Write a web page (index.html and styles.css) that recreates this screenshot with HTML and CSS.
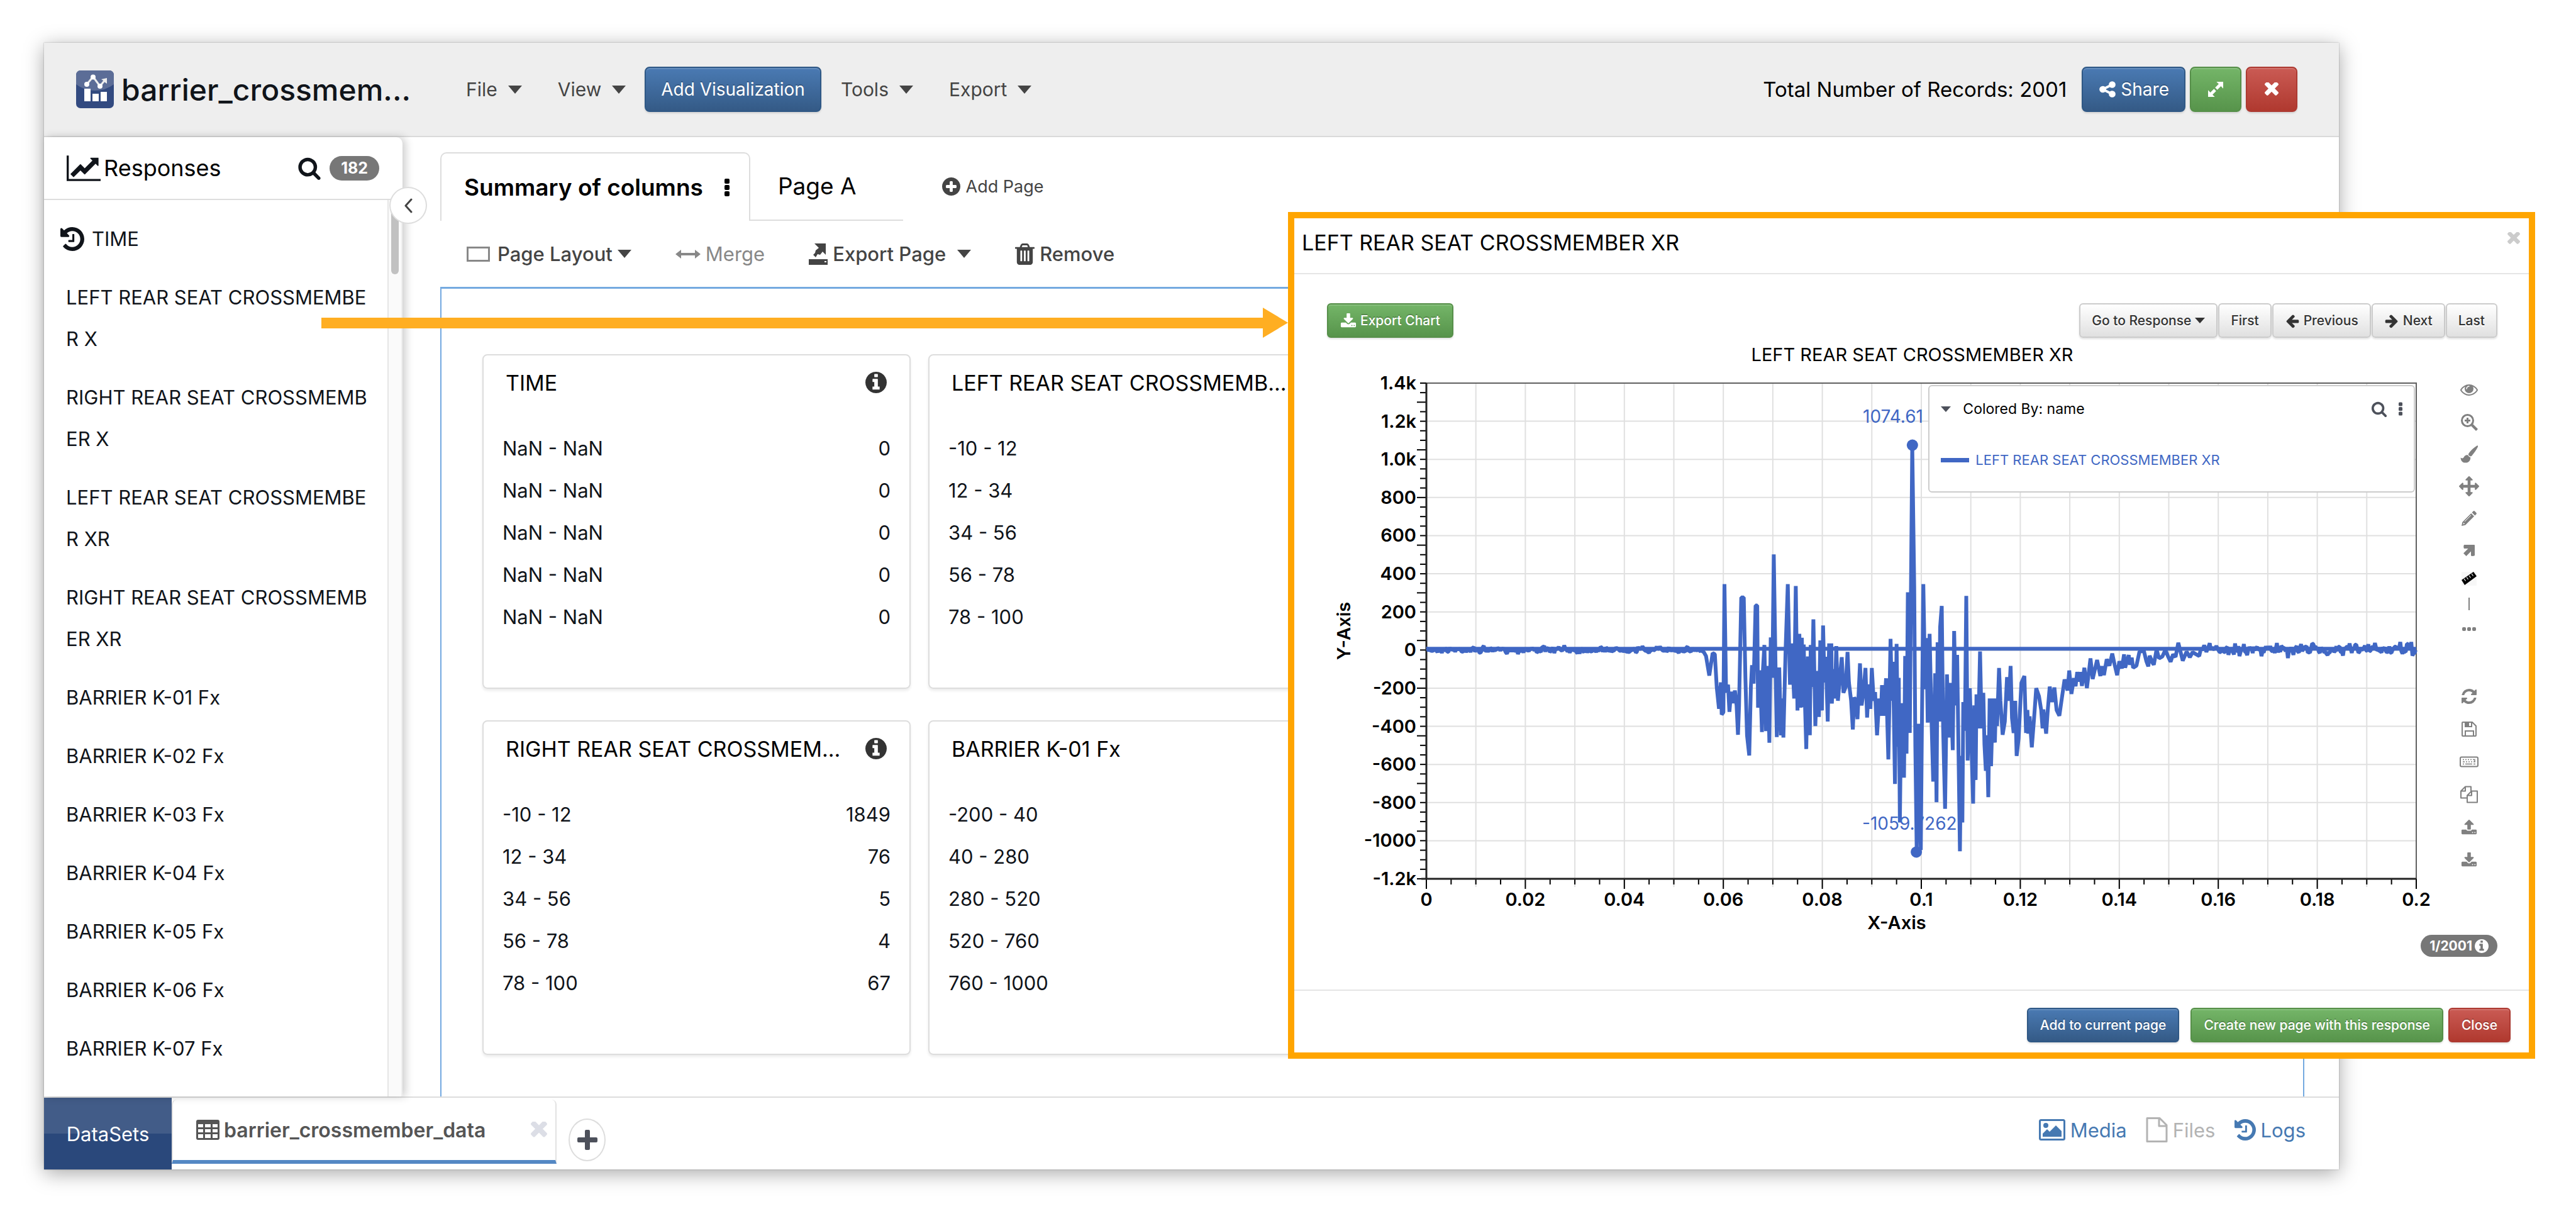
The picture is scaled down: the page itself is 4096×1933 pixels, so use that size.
FILE: index.html
```html
<!DOCTYPE html>
<html lang="en">
<head>
    <meta charset="UTF-8">
    <meta name="viewport" content="width=device-width, initial-scale=1.0">
    <title>barrier_crossmember_data</title>
    <link rel="stylesheet" href="styles.css">
</head>
<body>
    <svg class="sprite" aria-hidden="true">
        <symbol id="i-search" viewBox="0 0 1792 1792"><path d="M1216 832q0-185-131.5-316.5t-316.5-131.5-316.5 131.5-131.5 316.5 131.5 316.5 316.5 131.5 316.5-131.5 131.5-316.5zm512 832q0 52-38 90t-90 38q-54 0-90-38l-343-342q-179 124-399 124-143 0-273.5-55.5t-225-150-150-225-55.5-273.5 55.5-273.5 150-225 225-150 273.5-55.5 273.5 55.5 225 150 150 225 55.5 273.5q0 220-124 399l343 343q37 37 37 90z"/></symbol>
        <symbol id="i-share" viewBox="0 0 1792 1792"><path d="M1344 1024q133 0 226.5 93.5t93.5 226.5-93.5 226.5-226.5 93.5-226.5-93.5-93.5-226.5q0-12 2-34l-360-180q-92 86-218 86-133 0-226.5-93.5t-93.5-226.5 93.5-226.5 226.5-93.5q126 0 218 86l360-180q-2-22-2-34 0-133 93.5-226.5t226.5-93.5 226.5 93.5 93.5 226.5-93.5 226.5-226.5 93.5q-126 0-218-86l-360 180q2 22 2 34t-2 34l360 180q92-86 218-86z"/></symbol>
        <symbol id="i-expand" viewBox="0 0 24 24"><path d="M13 3h8v8l-2.700-2.700-4.300 4.300-2.600-2.600 4.300-4.300zM11 21H3v-8l2.700 2.700 4.300-4.300 2.600 2.600-4.300 4.300z"/></symbol>
        <symbol id="i-times" viewBox="302 430 1188 1190"><path d="M1490 1322q0 40-28 68l-136 136q-28 28-68 28t-68-28l-294-294-294 294q-28 28-68 28t-68-28l-136-136q-28-28-28-68t28-68l294-294-294-294q-28-28-28-68t28-68l136-136q28-28 68-28t68 28l294 294 294-294q28-28 68-28t68 28l136 136q28 28 28 68t-28 68l-294 294 294 294q28 28 28 68z"/></symbol>
        <symbol id="i-history" viewBox="128 128 1536 1536"><path d="M1664 896q0 156-61 298t-164 245-245 164-298 61q-172 0-327-72.500t-264-204.500q-7-10-6.500-22.500t8.500-20.500l137-138q10-9 25-9 16 2 23 12 73 95 179 147t225 52q104 0 198.500-40.500t163.500-109.500 109.500-163.500 40.500-198.500-40.500-198.500-109.500-163.500-163.500-109.500-198.500-40.500q-98 0-188 35.500t-160 101.500l137 138q31 30 14 69-17 40-59 40h-448q-26 0-45-19t-19-45v-448q0-42 40-59 39-17 69 14l130 129q107-101 244.500-156.500t284.500-55.500q156 0 298 61t245 164 164 245 61 298zm-640-288v448q0 14-9 23t-23 9h-320q-14 0-23-9t-9-23v-64q0-14 9-23t23-9h224v-352q0-14 9-23t23-9h64q14 0 23 9t9 23z"/></symbol>
        <symbol id="i-line-chart" viewBox="0 128 2048 1536"><path d="M2048 1536v128h-2048v-1536h128v1408h1920zm-128-1248v435q0 21-19.500 29.500t-35.500-7.500l-121-121-633 633q-10 10-23 10t-23-10l-233-233-416 416-192-192 585-585q10-10 23-10t23 10l233 233 464-464-121-121q-16-16-7.500-35.500t29.500-19.500h435q14 0 23 9t9 23z"/></symbol>
        <symbol id="i-plus-circle" viewBox="128 128 1536 1536"><path d="M1344 960v-128q0-26-19-45t-45-19h-256v-256q0-26-19-45t-45-19h-128q-26 0-45 19t-19 45v256h-256q-26 0-45 19t-19 45v128q0 26 19 45t45 19h256v256q0 26 19 45t45 19h128q26 0 45-19t19-45v-256h256q26 0 45-19t19-45zm320-64q0 209-103 385.500t-279.500 279.500-385.500 103-385.500-103-279.500-279.500-103-385.500 103-385.500 279.500-279.500 385.500-103 385.500 103 279.500 279.500 103 385.500z"/></symbol>
        <symbol id="i-info" viewBox="128 128 1536 1536"><path d="M1152 1376v-160q0-14-9-23t-23-9h-96v-512q0-14-9-23t-23-9h-320q-14 0-23 9t-9 23v160q0 14 9 23t23 9h96v320h-96q-14 0-23 9t-9 23v160q0 14 9 23t23 9h448q14 0 23-9t9-23zm-128-896v-160q0-14-9-23t-23-9h-192q-14 0-23 9t-9 23v160q0 14 9 23t23 9h192q14 0 23-9t9-23zm640 416q0 209-103 385.500t-279.500 279.500-385.500 103-385.500-103-279.500-279.500-103-385.500 103-385.500 279.500-279.500 385.500-103 385.500 103 279.500 279.500 103 385.500z"/></symbol>
        <symbol id="i-kebab" viewBox="0 0 8 28"><rect x="0" y="0" width="8" height="8" rx="2"/><rect x="0" y="10" width="8" height="8" rx="2"/><rect x="0" y="20" width="8" height="8" rx="2"/></symbol>
        <symbol id="i-trash" viewBox="192 128 1408 1536"><path d="M704 1376v-704q0-14-9-23t-23-9h-64q-14 0-23 9t-9 23v704q0 14 9 23t23 9h64q14 0 23-9t9-23zm256 0v-704q0-14-9-23t-23-9h-64q-14 0-23 9t-9 23v704q0 14 9 23t23 9h64q14 0 23-9t9-23zm256 0v-704q0-14-9-23t-23-9h-64q-14 0-23 9t-9 23v704q0 14 9 23t23 9h64q14 0 23-9t9-23zm-544-992h448l-48-117q-7-9-17-11h-317q-10 2-17 11zm928 32v64q0 14-9 23t-23 9h-96v948q0 83-47 143.500t-113 60.500h-832q-66 0-113-58.500t-47-141.500v-952h-96q-14 0-23-9t-9-23v-64q0-14 9-23t23-9h309l70-167q15-37 54-63t79-26h320q40 0 79 26t54 63l70 167h309q14 0 23 9t9 23z"/></symbol>
        <symbol id="i-merge" viewBox="0 0 40 14"><path d="M0 7l9-7v5h22V0l9 7-9 7V9H9v5z"/></symbol>
        <symbol id="i-export" viewBox="0 0 30 34"><path d="M0 25h30v9H0zM9 0h18v18l-5-5-4 5-4-1-3 5-4-4 3-3 1-4 5-4z"/><rect x="25" y="28" width="3" height="2" fill="#fff"/></symbol>
        <symbol id="i-arrow-left" viewBox="0 0 1792 1792"><path d="M1664 896v128q0 53-32.500 90.500t-84.500 37.500h-704l293 294q38 36 38 90t-38 90l-75 76q-37 37-90 37-52 0-91-37l-651-652q-37-37-37-90 0-52 37-91l651-650q38-38 91-38 52 0 90 38l75 74q38 38 38 91t-38 91l-293 293h704q52 0 84.500 37.500t32.500 90.500z"/></symbol>
        <symbol id="i-arrow-right" viewBox="0 0 1792 1792"><path transform="translate(1792 0) scale(-1 1)" d="M1664 896v128q0 53-32.500 90.500t-84.500 37.500h-704l293 294q38 36 38 90t-38 90l-75 76q-37 37-90 37-52 0-91-37l-651-652q-37-37-37-90 0-52 37-91l651-650q38-38 91-38 52 0 90 38l75 74q38 38 38 91t-38 91l-293 293h704q52 0 84.500 37.500t32.500 90.500z"/></symbol>
        <symbol id="i-download" viewBox="0 0 1792 1664"><path d="M1344 1344q0-26-19-45t-45-19-45 19-19 45 19 45 45 19 45-19 19-45zm256 0q0-26-19-45t-45-19-45 19-19 45 19 45 45 19 45-19 19-45zm128-224v320q0 40-28 68t-68 28h-1472q-40 0-68-28t-28-68v-320q0-40 28-68t68-28h465l135 136q58 56 136 56t136-56l136-136h464q40 0 68 28t28 68zm-325-569q17 41-14 70l-448 448q-18 19-45 19t-45-19l-448-448q-31-29-14-70 17-39 59-39h256v-448q0-26 19-45t45-19h256q26 0 45 19t19 45v448h256q42 0 59 39z"/></symbol>
        <symbol id="i-upload" viewBox="0 0 1792 1792"><path d="M1344 1472q0-26-19-45t-45-19-45 19-19 45 19 45 45 19 45-19 19-45zm256 0q0-26-19-45t-45-19-45 19-19 45 19 45 45 19 45-19 19-45zm128-224v320q0 40-28 68t-68 28h-1472q-40 0-68-28t-28-68v-320q0-40 28-68t68-28h427q21 56 70.500 92t110.500 36h256q61 0 110.500-36t70.500-92h427q40 0 68 28t28 68zm-325-648q-17 40-59 40h-256v448q0 26-19 45t-45 19h-256q-26 0-45-19t-19-45v-448h-256q-42 0-59-40-17-39 14-69l448-448q18-19 45-19t45 19l448 448q31 30 14 69z"/></symbol>
        <symbol id="i-eye" viewBox="0 64 1792 1792"><path d="M1664 960q-152-236-381-353 61 104 61 225 0 185-131.500 316.500t-316.500 131.500-316.500-131.500-131.500-316.500q0-121 61-225-229 117-381 353 133 205 333.500 326.500t434.500 121.500 434.500-121.500 333.500-326.500zm-720-384q0-20-14-34t-34-14q-125 0-214.500 89.500t-89.500 214.500q0 20 14 34t34 14 34-14 14-34q0-86 61-147t147-61q20 0 34-14t14-34zm848 384q0 34-20 69-140 230-376.500 368.500t-499.500 138.500-499.500-139-376.500-368q-20-35-20-69t20-69q140-229 376.500-368t499.500-139 499.500 139 376.500 368q20 35 20 69z"/></symbol>
        <symbol id="i-zoom" viewBox="0 0 28 28"><circle cx="11.500" cy="11.500" r="9" fill="none" stroke="currentColor" stroke-width="3"/><path d="M10 7h3v3h3v3h-3v3h-3v-3H7v-3h3zM17 20l3-3 8 8-3 3z"/></symbol>
        <symbol id="i-brush" viewBox="0 0 28 28"><path d="M26.500.600c1.500-.9 2 .6 1.200 2.200-2.500 5-6 9.900-9.300 13.600-1.300 1.400-2.800 1.300-4.200.2-1.500-1.200-1.700-2.600-.6-4.200C16.800 8 21.800 3.400 26.500.6zM12.200 15.500c.9 2 2.200 3.100 4 3.500.3 4.800-2.700 8.300-7.400 8.600C4 27.900.900 24.900.500 19.400c2 1.400 3.800 1.600 5.200-.7 1.300-2.400 3.500-3.800 6.500-3.200z"/></symbol>
        <symbol id="i-move" viewBox="0 0 1792 1792"><path d="M1792 896q0 26-19 45l-256 256q-19 19-45 19t-45-19-19-45v-128h-384v384h128q26 0 45 19t19 45-19 45l-256 256q-19 19-45 19t-45-19l-256-256q-19-19-19-45t19-45 45-19h128v-384h-384v128q0 26-19 45t-45 19-45-19l-256-256q-19-19-19-45t19-45l256-256q19-19 45-19t45 19 19 45v128h384v-384h-128q-26 0-45-19t-19-45 19-45l256-256q19-19 45-19t45 19l256 256q19 19 19 45t-19 45-45 19h-128v384h384v-128q0-26 19-45t45-19 45 19l256 256q19 19 19 45z"/></symbol>
        <symbol id="i-pencil" viewBox="0 0 24 24"><path d="M18.500.700c.800-.800 1.800-.8 2.600 0l2.200 2.200c.8.800.8 1.800 0 2.600l-2 2-4.800-4.800zM15.300 4l4.700 4.700L6 22.700 0 24l1.300-6zM3.200 18.800l-.7 2.700 2.700-.7z"/><path d="M5 17L15 7" stroke="#fff" stroke-width="1"/></symbol>
        <symbol id="i-arrow-ne" viewBox="0 0 18 18"><path d="M1 0h16q1 0 1 1v16q-3 1.500-6 .5V10.500L4.500 18 0 13.500 7.500 6H1Q-.5 3 1 0z"/></symbol>
        <symbol id="i-ruler" viewBox="0 0 24 22"><rect width="24" height="22" fill="#f7f7f7"/><path fill="#000" d="M0 13L19 0l5 7L5 21z"/><path d="M4 11l2.500 3.500M8 8.500l2.500 3.500M12 6l2.500 3.500M16 3l2.500 3.500" stroke="#fff" stroke-width="1.200"/></symbol>
        <symbol id="i-vline" viewBox="0 0 20 20"><rect x="9" y="0" width="2" height="20"/></symbol>
        <symbol id="i-dots" viewBox="0 0 22 6"><rect width="6" height="6" rx="2"/><rect x="8" width="6" height="6" rx="2"/><rect x="16" width="6" height="6" rx="2"/></symbol>
        <symbol id="i-refresh" viewBox="128 128 1536 1536"><path d="M1639 1056q0 5-1 7-64 268-268 434.500t-478 166.500q-146 0-282.500-55t-243.500-157l-129 129q-19 19-45 19t-45-19-19-45v-448q0-26 19-45t45-19h448q26 0 45 19t19 45-19 45l-137 137q71 66 161 102t187 36q134 0 250-65t186-179q11-17 53-117 8-23 30-23h192q13 0 22.500 9.500t9.500 22.500zm25-800v448q0 26-19 45t-45 19h-448q-26 0-45-19t-19-45 19-45l138-138q-148-137-349-137-134 0-250 65t-186 179q-11 17-53 117-8 23-30 23h-199q-13 0-22.500-9.500t-9.500-22.500v-7q65-268 270-434.500t480-166.500q146 0 284 55.500t245 156.500l130-129q19-19 45-19t45 19 19 45z"/></symbol>
        <symbol id="i-save" viewBox="0 0 24 24"><path d="M2 1h15l6 6v15q0 1-1 1H2q-1 0-1-1V2q0-1 1-1zM6 23v-8h13v8M6 1v7h10V1" fill="none" stroke="currentColor" stroke-width="2"/><rect x="6" y="2" width="6" height="6"/></symbol>
        <symbol id="i-keyboard" viewBox="0 0 30 17"><rect x="1" y="1" width="28" height="15" rx="2" fill="none" stroke="currentColor" stroke-width="2"/><path d="M5 5h2m2 0h2m2 0h2m2 0h2m2 0h3v3M5 8.500h3m2 0h2m2 0h2m2 0h2m2 0h3M5 12h2m2 0h11m2 0h3" fill="none" stroke="currentColor" stroke-width="1.500"/></symbol>
        <symbol id="i-copy" viewBox="0 0 28 27"><path d="M11 19H1V8l7-7h9v7M8 1v7H1M18 8v7h-7M18 8h9v18H11V15z" fill="none" stroke="currentColor" stroke-width="2" stroke-linejoin="round"/></symbol>
        <symbol id="i-table" viewBox="0 0 37 32"><path fill-rule="evenodd" d="M3 0h31q3 0 3 3v26q0 3-3 3H3q-3 0-3-3V3q0-3 3-3zM3 7v5h8V7zm11 0v5h9V7zm12 0v5h8V7zM3 15v5h8v-5zm11 0v5h9v-5zm12 0v5h8v-5zM3 23v6h8v-6zm11 0v6h9v-6zm12 0v6h8v-6z"/></symbol>
        <symbol id="i-picture" viewBox="0 0 42 34"><rect x="1.500" y="1.500" width="39" height="31" rx="2" fill="none" stroke="currentColor" stroke-width="3"/><circle cx="11" cy="10" r="4"/><path d="M6 28v-5l7-7 4 4 10-10 9 9v9z"/></symbol>
        <symbol id="i-file" viewBox="0 0 35 40"><path d="M2 1.500h20l11 11v26H2zM21 2v12h12" fill="none" stroke="currentColor" stroke-width="3" stroke-linejoin="round"/></symbol>
        <symbol id="i-plus" viewBox="0 0 32 32"><path d="M12 2q0-2 2-2h4q2 0 2 2v10h10q2 0 2 2v4q0 2-2 2H20v10q0 2-2 2h-4q-2 0-2-2V20H2q-2 0-2-2v-4q0-2 2-2h10z"/></symbol>
        <symbol id="i-chevron" viewBox="0 0 14 24"><path d="M12 2L3 12l9 10" fill="none" stroke="currentColor" stroke-width="3" stroke-linecap="round" stroke-linejoin="round"/></symbol>
    </svg>

    <div class="app">
        <header class="topbar">
            <div class="brand">
                <svg class="logo" viewBox="0 0 60 60">
                    <defs><clipPath id="logo-clip"><rect width="60" height="60" rx="7"/></clipPath></defs>
                    <g clip-path="url(#logo-clip)">
                        <rect width="60" height="60" fill="#324a80"/>
                        <path d="M0 0h60v22Q47 32 30 32T0 22z" fill="#5c6d97"/>
                    </g>
                    <path d="M17 22l10-12 11 15 8-10" fill="none" stroke="#ededed" stroke-width="3"/>
                    <path d="M49 12l0 9-3-2-3-3-3-2z" fill="#ededed"/>
                    <g fill="#fff">
                        <circle cx="17" cy="22" r="4"/><circle cx="27" cy="10.500" r="4"/><circle cx="38" cy="25" r="4"/>
                        <rect x="13" y="29" width="10" height="20"/><rect x="26" y="37" width="10" height="12"/><rect x="39" y="34" width="10" height="15"/>
                    </g>
                </svg>
                <h1 class="title">barrier_crossmem...</h1>
            </div>
            <nav class="menu">
                <button class="menu-item">File<span class="caret"></span></button>
                <button class="menu-item">View<span class="caret"></span></button>
                <button class="btn btn-primary btn-lg">Add Visualization</button>
                <button class="menu-item">Tools<span class="caret"></span></button>
                <button class="menu-item">Export<span class="caret"></span></button>
            </nav>
            <div class="topbar-right">
                <span class="records">Total Number of Records: 2001</span>
                <button class="btn btn-primary btn-lg"><svg class="icon ic-30"><use href="#i-share"/></svg>Share</button>
                <button class="btn btn-success btn-lg btn-square" aria-label="Full screen"><svg class="icon ic-32"><use href="#i-expand"/></svg></button>
                <button class="btn btn-danger btn-lg btn-square" aria-label="Close"><svg class="icon ic-22"><use href="#i-times"/></svg></button>
            </div>
        </header>

        <div class="workspace">
            <aside class="sidebar">
                <div class="sidebar-head">
                    <svg class="icon ic-chart"><use href="#i-line-chart"/></svg>
                    <h2>Responses</h2>
                    <svg class="icon ic-38"><use href="#i-search"/></svg>
                    <span class="badge">182</span>
                </div>
                <div class="sidebar-body">
                    <ul class="responses">
                        <li class="time"><svg class="icon ic-38"><use href="#i-history"/></svg>TIME</li>
                        <li>LEFT REAR SEAT CROSSMEMBER X</li>
                        <li>RIGHT REAR SEAT CROSSMEMBER X</li>
                        <li>LEFT REAR SEAT CROSSMEMBER XR</li>
                        <li>RIGHT REAR SEAT CROSSMEMBER XR</li>
                        <li>BARRIER K-01 Fx</li>
                        <li>BARRIER K-02 Fx</li>
                        <li>BARRIER K-03 Fx</li>
                        <li>BARRIER K-04 Fx</li>
                        <li>BARRIER K-05 Fx</li>
                        <li>BARRIER K-06 Fx</li>
                        <li>BARRIER K-07 Fx</li>
                    </ul>
                    <div class="scroll-track"><div class="scroll-thumb"></div></div>
                </div>
                <button class="collapse" aria-label="Collapse"><svg class="icon ic-chevron"><use href="#i-chevron"/></svg></button>
            </aside>

            <main class="content">
                <div class="tabs">
                    <button class="tab active">Summary of columns<svg class="icon ic-kebab"><use href="#i-kebab"/></svg></button>
                    <button class="tab">Page A</button>
                    <button class="add-page"><svg class="icon ic-29"><use href="#i-plus-circle"/></svg>Add Page</button>
                </div>
                <div class="page-tools">
                    <button class="tool tool-layout"><span class="square"></span>Page Layout<span class="caret"></span></button>
                    <button class="tool tool-merge" disabled><svg class="icon ic-merge"><use href="#i-merge"/></svg>Merge</button>
                    <button class="tool tool-export"><svg class="icon ic-export"><use href="#i-export"/></svg>Export Page<span class="caret"></span></button>
                    <button class="tool"><svg class="icon ic-trash"><use href="#i-trash"/></svg>Remove</button>
                </div>
                <div class="page">
                    <section class="card">
                        <h3>TIME<svg class="icon ic-34"><use href="#i-info"/></svg></h3>
                        <table>
                            <tr><td>NaN - NaN</td><td>0</td></tr>
                            <tr><td>NaN - NaN</td><td>0</td></tr>
                            <tr><td>NaN - NaN</td><td>0</td></tr>
                            <tr><td>NaN - NaN</td><td>0</td></tr>
                            <tr><td>NaN - NaN</td><td>0</td></tr>
                        </table>
                    </section>
                    <section class="card">
                        <h3>LEFT REAR SEAT CROSSMEMB...</h3>
                        <table>
                            <tr><td>-10 - 12</td></tr>
                            <tr><td>12 - 34</td></tr>
                            <tr><td>34 - 56</td></tr>
                            <tr><td>56 - 78</td></tr>
                            <tr><td>78 - 100</td></tr>
                        </table>
                    </section>
                    <section class="card">
                        <h3>RIGHT REAR SEAT CROSSMEM...<svg class="icon ic-34"><use href="#i-info"/></svg></h3>
                        <table>
                            <tr><td>-10 - 12</td><td>1849</td></tr>
                            <tr><td>12 - 34</td><td>76</td></tr>
                            <tr><td>34 - 56</td><td>5</td></tr>
                            <tr><td>56 - 78</td><td>4</td></tr>
                            <tr><td>78 - 100</td><td>67</td></tr>
                        </table>
                    </section>
                    <section class="card">
                        <h3>BARRIER K-01 Fx</h3>
                        <table>
                            <tr><td>-200 - 40</td></tr>
                            <tr><td>40 - 280</td></tr>
                            <tr><td>280 - 520</td></tr>
                            <tr><td>520 - 760</td></tr>
                            <tr><td>760 - 1000</td></tr>
                        </table>
                    </section>
                </div>
            </main>
        </div>

        <footer class="bottombar">
            <button class="datasets">DataSets</button>
            <div class="dataset-tab">
                <svg class="icon ic-table"><use href="#i-table"/></svg>
                <span class="dataset-name">barrier_crossmember_data</span>
                <svg class="icon ic-26"><use href="#i-times"/></svg>
            </div>
            <button class="add-dataset" aria-label="Add dataset"><svg class="icon ic-32"><use href="#i-plus"/></svg></button>
            <nav class="links">
                <a href="#"><svg class="icon ic-picture"><use href="#i-picture"/></svg>Media</a>
                <a href="#" class="muted"><svg class="icon ic-file"><use href="#i-file"/></svg>Files</a>
                <a href="#"><svg class="icon ic-34"><use href="#i-history"/></svg>Logs</a>
            </nav>
        </footer>
    </div>

    <div class="pointer"><span class="pointer-line"></span><span class="pointer-head"></span></div>

    <div class="modal" role="dialog">
        <div class="modal-head">
            <h2>LEFT REAR SEAT CROSSMEMBER XR</h2>
            <button class="modal-x" aria-label="Close"><svg class="icon ic-20"><use href="#i-times"/></svg></button>
        </div>
        <div class="modal-body">
            <div class="chart-bar">
                <button class="btn btn-success"><svg class="icon ic-26"><use href="#i-download"/></svg>Export Chart</button>
                <div class="pager">
                    <button class="btn btn-default">Go to Response<span class="caret caret-sm"></span></button>
                    <button class="btn btn-default">First</button>
                    <button class="btn btn-default"><svg class="icon ic-24"><use href="#i-arrow-left"/></svg>Previous</button>
                    <button class="btn btn-default"><svg class="icon ic-24"><use href="#i-arrow-right"/></svg>Next</button>
                    <button class="btn btn-default">Last</button>
                </div>
            </div>
            <h3 class="chart-title">LEFT REAR SEAT CROSSMEMBER XR</h3>
            <div class="chart-row">
                <div class="chart">
                    <svg id="plot" class="plot" viewBox="0 0 1771 896"></svg>
                    <div class="legend">
                        <div class="legend-head">
                            <span class="caret caret-sm"></span>
                            <span class="legend-title">Colored By: name</span>
                            <svg class="icon ic-26"><use href="#i-search"/></svg>
                            <svg class="icon ic-kebab-sm"><use href="#i-kebab"/></svg>
                        </div>
                        <div class="legend-item"><span class="swatch"></span>LEFT REAR SEAT CROSSMEMBER XR</div>
                    </div>
                </div>
                <div class="chart-tools">
                    <div class="group-a">
                        <svg class="icon ic-28"><use href="#i-eye"/></svg>
                        <svg class="icon ic-28"><use href="#i-zoom"/></svg>
                        <svg class="icon ic-28"><use href="#i-brush"/></svg>
                        <svg class="icon ic-32"><use href="#i-move"/></svg>
                        <svg class="icon ic-24"><use href="#i-pencil"/></svg>
                        <svg class="icon ic-18"><use href="#i-arrow-ne"/></svg>
                    </div>
                    <div class="group-b">
                        <svg class="icon ic-24"><use href="#i-ruler"/></svg>
                        <svg class="icon ic-20"><use href="#i-vline"/></svg>
                        <svg class="icon ic-22"><use href="#i-dots"/></svg>
                    </div>
                    <div class="group-c">
                        <svg class="icon ic-24"><use href="#i-refresh"/></svg>
                        <svg class="icon ic-24"><use href="#i-save"/></svg>
                        <svg class="icon ic-30"><use href="#i-keyboard"/></svg>
                        <svg class="icon ic-28"><use href="#i-copy"/></svg>
                        <svg class="icon ic-26"><use href="#i-upload"/></svg>
                        <svg class="icon ic-26"><use href="#i-download"/></svg>
                    </div>
                </div>
            </div>
            <div class="counter-row"><span class="counter">1/2001<svg class="icon ic-22"><use href="#i-info"/></svg></span></div>
        </div>
        <div class="modal-foot">
            <button class="btn btn-primary btn-add">Add to current page</button>
            <button class="btn btn-success">Create new page with this response</button>
            <button class="btn btn-danger">Close</button>
        </div>
    </div>

    <script src="script.js"></script>
</body>
</html>
```

FILE: styles.css
```css
* {
    box-sizing: border-box;
}
body {
    margin: 0;
    min-height: 100vh;
    padding: 68px 377px 74px 70px;
    position: relative;
    background: #fff;
    color: #10141a;
    font-family: Inter, "Liberation Sans", sans-serif;
    font-size: 31px;
}
h1, h2, h3, ul {
    margin: 0;
    padding: 0;
    font-weight: 400;
}
button {
    font: inherit;
    color: inherit;
    background: none;
    border: 0;
    padding: 0;
    margin: 0;
    display: flex;
    align-items: center;
    white-space: nowrap;
}
.sprite {
    position: absolute;
    width: 0;
    height: 0;
}
.icon {
    fill: currentColor;
    flex: none;
    display: block;
}
.ic-18 { width: 18px; height: 18px; }
.ic-20 { width: 20px; height: 20px; }
.ic-22 { width: 22px; height: 22px; }
.ic-24 { width: 24px; height: 24px; }
.ic-26 { width: 26px; height: 26px; }
.ic-28 { width: 28px; height: 28px; }
.ic-29 { width: 29px; height: 29px; }
.ic-30 { width: 30px; height: 30px; }
.ic-32 { width: 32px; height: 32px; }
.ic-34 { width: 34px; height: 34px; }
.ic-38 { width: 38px; height: 38px; }
.ic-chart { width: 54px; height: 41px; }
.ic-kebab { width: 8px; height: 28px; }
.ic-kebab-sm { width: 6px; height: 22px; }
.ic-merge { width: 40px; height: 14px; }
.ic-export { width: 30px; height: 34px; }
.ic-trash { width: 31px; height: 34px; }
.ic-table { width: 37px; height: 32px; }
.ic-picture { width: 42px; height: 34px; }
.ic-file { width: 35px; height: 40px; }
.ic-chevron { width: 14px; height: 24px; }
.caret {
    width: 0;
    height: 0;
    border-left: 11px solid transparent;
    border-right: 11px solid transparent;
    border-top: 13px solid currentColor;
}
.caret-sm {
    border-left-width: 8px;
    border-right-width: 8px;
    border-top-width: 9px;
}

/* buttons */
.btn {
    height: 55px;
    padding: 0 19px;
    gap: 6px;
    border: 2px solid;
    border-radius: 6px;
    justify-content: center;
    font-size: 21px;
    font-weight: 500;
    color: #fff;
    text-shadow: 0 -2px 0 rgba(0, 0, 0, 0.2);
    box-shadow: inset 0 2px 0 rgba(255, 255, 255, 0.15), 0 2px 3px rgba(0, 0, 0, 0.12);
}
.btn-lg {
    height: 72px;
    padding: 0 24px;
    font-size: 28px;
    font-weight: 400;
    border-radius: 8px;
}
.btn-square {
    width: 82px;
    padding: 0;
}
.btn-primary {
    background: linear-gradient(#4a7ab3, #345a86);
    border-color: #2f5885;
}
.btn-success {
    background: linear-gradient(#74b568, #57944b);
    border-color: #568f49;
}
.btn-danger {
    background: linear-gradient(#ca5b54, #b0392f);
    border-color: #ad3a32;
}
.btn-default {
    background: linear-gradient(#fff, #e0e0e0);
    border-color: #ccc;
    color: #333;
    padding: 0 18px;
    text-shadow: 0 2px 0 #fff;
}

/* app window */
.app {
    display: flex;
    flex-direction: column;
    min-height: calc(100vh - 142px);
    background: #fff;
    box-shadow: 0 6px 30px rgba(0, 0, 0, 0.35), 0 0 2px rgba(0, 0, 0, 0.3);
}
.topbar {
    display: flex;
    align-items: center;
    height: 150px;
    padding: 0 66px 0 51px;
    background: #eee;
    border-bottom: 2px solid #dadada;
}
.brand {
    display: flex;
    align-items: center;
    gap: 12px;
    width: 593px;
}
.logo {
    width: 60px;
    height: 60px;
}
.title {
    font-size: 48px;
    font-weight: 500;
}
.menu {
    display: flex;
    align-items: center;
    gap: 4px;
    flex: 1;
    color: #444;
}
.menu-item {
    padding: 0 26px 0 27px;
    gap: 17px;
    font-size: 30px;
}
.topbar-right {
    display: flex;
    align-items: center;
    gap: 7px;
}
.records {
    margin-right: 17px;
    font-size: 33px;
    color: #000;
}

.workspace {
    display: flex;
    flex: 1;
}
.sidebar {
    position: relative;
    display: flex;
    flex-direction: column;
    width: 570px;
    flex: none;
    border-top-right-radius: 10px;
    box-shadow: 5px 0 14px rgba(0, 0, 0, 0.2);
}
.sidebar-head {
    display: flex;
    align-items: center;
    height: 100px;
    padding: 0 37px 0 36px;
    border-bottom: 2px solid #ddd;
}
.sidebar-head h2 {
    flex: 1;
    margin-left: 5px;
    font-size: 36px;
    color: #000;
}
.badge {
    margin-left: 13px;
    padding: 0 18px;
    border-radius: 20px;
    background: #777;
    color: #fff;
    font-size: 25px;
    font-weight: 700;
    line-height: 39px;
}
.sidebar-body {
    display: flex;
    flex: 1;
}
.responses {
    flex: 1;
    padding: 16px 22px 0 35px;
    list-style: none;
    word-break: break-all;
}
.responses li {
    padding: 13px 0 14px;
    line-height: 66px;
}
.responses .time {
    display: flex;
    align-items: center;
    gap: 12px;
    margin-left: -9px;
}
.scroll-track {
    width: 24px;
    padding: 0 4px;
    background: #fafafa;
    border-left: 2px solid #e6e6e6;
    border-right: 2px solid #eee;
}
.scroll-thumb {
    height: 118px;
    border-radius: 6px;
    background: #c1c1c1;
}
.collapse {
    position: absolute;
    top: 79px;
    right: -39px;
    width: 60px;
    height: 59px;
    justify-content: center;
    border: 2px solid #ddd;
    border-radius: 50%;
    background: #fff;
    color: #444;
}

.content {
    flex: 1;
    display: flex;
    flex-direction: column;
    padding: 24px 55px 0 60px;
}
.tabs {
    display: flex;
    align-items: stretch;
    height: 109px;
    color: #000;
}
.tab {
    padding: 0 74px 0 44px;
    border-bottom: 2px solid #ddd;
    font-size: 37px;
}
.tab.active {
    gap: 34px;
    padding: 0 31px 0 36px;
    border: 2px solid #ddd;
    border-bottom: 0;
    border-radius: 10px 10px 0 0;
    font-weight: 600;
}
.add-page {
    gap: 9px;
    margin-left: 62px;
    font-size: 27px;
    color: #444;
}
.page-tools {
    display: flex;
    align-items: center;
    height: 105px;
    padding-left: 42px;
    color: #444;
}
.tool {
    gap: 8px;
    font-weight: 500;
}
.square {
    width: 37px;
    height: 24px;
    margin-right: 4px;
    border: 3px solid #888;
}
.tool-layout {
    margin-right: 70px;
}
.tool-merge {
    margin-right: 70px;
    color: #888;
    font-weight: 400;
}
.tool-export {
    margin-right: 70px;
}
.tool-export .caret {
    margin-left: 10px;
}
.page {
    flex: 1;
    display: grid;
    grid-template-columns: repeat(4, 1fr);
    grid-auto-rows: 532px;
    gap: 50px 28px;
    padding: 104px 87px 64px 65px;
    border: 2px solid #74a9e0;
    border-top-width: 3px;
    border-bottom: 0;
}
.card {
    border: 2px solid #ddd;
    border-radius: 8px;
    padding: 13px 30px 0;
    box-shadow: 0 3px 4px rgba(0, 0, 0, 0.08);
}
.card:nth-child(odd) {
    grid-column: 1;
}
.card:nth-child(even) {
    grid-column: 2;
}
.card h3 {
    display: flex;
    align-items: center;
    justify-content: space-between;
    height: 60px;
    margin-bottom: 41px;
    padding: 0 6px 0 5px;
    font-size: 34px;
    color: #000;
    white-space: nowrap;
}
.card .icon {
    color: #333;
}
.card table {
    width: 100%;
    border-collapse: collapse;
}
.card td {
    height: 67px;
    padding: 0;
}
.card td + td {
    text-align: right;
}

.bottombar {
    display: flex;
    height: 116px;
    border-top: 2px solid #ddd;
}
.datasets {
    width: 203px;
    justify-content: center;
    background: linear-gradient(#425c88 50%, #2a487b 50%);
    color: #fff;
}
.dataset-tab {
    display: flex;
    align-items: center;
    width: 612px;
    margin: 3px 0 9px;
    padding: 0 13px 0 37px;
    border: 2px solid #e2e2e2;
    border-top: 0;
    border-bottom: 6px solid #5488c4;
    border-radius: 8px 8px 0 0;
    color: #555;
}
.dataset-name {
    flex: 1;
    margin-left: 7px;
    font-size: 32px;
    font-weight: 600;
}
.dataset-tab .ic-26 {
    color: #dcdee6;
}
.add-dataset {
    width: 59px;
    height: 68px;
    margin: 33px 0 0 19px;
    justify-content: center;
    border: 2px solid #ddd;
    border-radius: 50%;
    color: #4d515b;
}
.links {
    display: flex;
    align-items: center;
    gap: 30px;
    margin: 0 53px 12px auto;
}
.links a {
    display: flex;
    align-items: center;
    gap: 8px;
    color: #4679b2;
    text-decoration: none;
}
.links .muted {
    color: #b3b3b3;
}

/* arrow from the list to the dialog */
.pointer {
    position: absolute;
    top: 489px;
    left: 511px;
    right: 50%;
    display: flex;
    align-items: center;
}
.pointer-line {
    flex: 1;
    height: 17px;
    background: #ffae22;
}
.pointer-head {
    border-top: 24px solid transparent;
    border-bottom: 24px solid transparent;
    border-left: 40px solid #ffae22;
}

.modal {
    position: absolute;
    top: 337px;
    left: 50%;
    right: 65px;
    border: 10px solid #ffa500;
    background: #fff;
}
.modal-head {
    display: flex;
    justify-content: space-between;
    padding: 11px 14px 20px 12px;
    border-bottom: 2px solid #e5e5e5;
}
.modal-head h2 {
    font-size: 34px;
    line-height: 56px;
    color: #000;
}
.modal-x {
    height: 42px;
    color: #ccc;
}
.modal-body {
    padding: 46px 50px 52px 52px;
    border-bottom: 2px solid #e5e5e5;
}
.chart-bar {
    display: flex;
    justify-content: space-between;
}
.pager {
    display: flex;
    gap: 1px;
}
.chart-title {
    margin-top: 7px;
    text-align: center;
    font-size: 29px;
    line-height: 40px;
    color: #000;
}
.chart-row {
    display: flex;
    margin-top: 6px;
}
.chart {
    position: relative;
    flex: 1;
}
.plot {
    display: block;
    width: 100%;
}
.legend {
    position: absolute;
    top: 22px;
    left: 54%;
    right: 41px;
    height: 171px;
    padding: 22px 18px 0 18px;
    background: #fff;
    border: 2px solid #ccc;
    border-radius: 6px;
}
.legend-head {
    display: flex;
    align-items: center;
    color: #4d515b;
}
.legend-title {
    flex: 1;
    margin-left: 19px;
    font-size: 23px;
    color: #000;
}
.ic-kebab-sm {
    margin-left: 18px;
}
.legend-item {
    display: flex;
    align-items: center;
    gap: 10px;
    margin-top: 54px;
    font-size: 22px;
    color: #4067c4;
}
.swatch {
    width: 45px;
    height: 7px;
    background: #4067c4;
}
.chart-tools {
    width: 90px;
    padding-top: 4px;
    color: #808080;
}
.chart-tools div {
    display: grid;
    place-items: center;
}
.group-a {
    grid-auto-rows: 51px;
}
.group-b {
    grid-auto-rows: 40px;
}
.group-c {
    grid-auto-rows: 52px;
    margin-top: 61px;
}
.counter-row {
    display: flex;
    justify-content: flex-end;
}
.counter {
    display: flex;
    align-items: center;
    gap: 4px;
    height: 35px;
    padding: 0 14px;
    border-radius: 18px;
    background: #777;
    color: #fff;
    font-size: 21px;
    font-weight: 700;
}
.modal-foot {
    display: flex;
    justify-content: flex-end;
    gap: 8px;
    padding: 27px 29px 16px;
}
.btn-add {
    margin-right: 10px;
}

/* chart */
.grid {
    stroke: #e0e0e0;
    stroke-width: 2;
}
.tick {
    stroke: #000;
    stroke-width: 2;
}
.frame {
    fill: none;
    stroke: #606060;
    stroke-width: 2;
}
.axis {
    stroke: #222;
    stroke-width: 3;
}
.zero {
    stroke: #999;
    stroke-width: 2;
}
.tick-label, .axis-label {
    font-size: 29px;
    font-weight: 600;
    fill: #000;
}
.axis-label {
    text-anchor: middle;
}
.series {
    fill: none;
    stroke: #4067c4;
    stroke-width: 6;
    stroke-linejoin: bevel;
}
.marker {
    fill: #4067c4;
}
.marker-label {
    font-size: 28px;
    fill: #4067c4;
}
```

FILE: script.js
```js
const plot = document.getElementById('plot');
const area = { left: 158, top: 19, width: 1574, height: 788 };
const X_MAX = 0.2, Y_MIN = -1200, Y_MAX = 1400;

const px = t => area.left + t / X_MAX * area.width;
const py = v => area.top + (Y_MAX - v) / (Y_MAX - Y_MIN) * area.height;

function add(tag, attrs, text) {
    const el = document.createElementNS('http://www.w3.org/2000/svg', tag);
    for (const key in attrs) el.setAttribute(key, attrs[key]);
    if (text) el.textContent = text;
    plot.appendChild(el);
}
function line(cls, x1, y1, x2, y2) {
    add('line', { class: cls, x1, y1, x2, y2 });
}

const bottom = area.top + area.height;
const right = area.left + area.width;

// grid
for (let i = 1; i < 20; i++) line('grid', px(i / 100), area.top, px(i / 100), bottom + 13);
for (let v = -1000; v < 1400; v += 200) line('grid', area.left, py(v), right, py(v));
add('rect', { class: 'frame', x: area.left, y: area.top, width: area.width, height: area.height });

// ticks and labels
for (let v = Y_MIN; v <= Y_MAX; v += 50) {
    const long = (v + 1200) % 250 === 0;
    line('tick', area.left - (long ? 15 : 10), py(v), area.left, py(v));
}
for (let v = Y_MIN; v <= Y_MAX; v += 200) {
    let label = String(v);
    if (v >= 1000 || v === Y_MIN) label = (v / 1000).toFixed(1) + 'k';
    add('text', { class: 'tick-label', x: area.left - 16, y: py(v) + 10, 'text-anchor': 'end' }, label);
}
for (let i = 0; i <= 40; i++) {
    const x = px(i * 0.005);
    if (i % 4 === 0) {
        line('tick', x, bottom, x, bottom + 16);
        add('text', { class: 'tick-label', x, y: bottom + 43, 'text-anchor': 'middle' }, String(i * 5 / 1000));
    } else {
        line('tick', x, bottom, x, bottom + 9);
    }
}
line('axis', area.left, area.top, area.left, bottom);
line('axis', area.left - 8, bottom, right, bottom);
add('text', { class: 'axis-label', x: 906, y: 887 }, 'X-Axis');
add('text', { class: 'axis-label', x: 0, y: 0, transform: 'translate(37 413) rotate(-90)' }, 'Y-Axis');

const T0 = 0.04632, DT = 0.00005564, OFFSET = 576.6, GAIN = 1.2042;
const burst = [
    [165,480],[175,488],[183,505],[195,590],[207,492],[215,497],[222,640],[230,735],[237,620],[240,760],[246,750],[250,192],
    [256,665],[263,630],[268,748],[274,660],[281,710],[288,655],[294,720],[299,848],[303,720],[311,250],[320,250],
    [326,600],[332,850],[340,938],[346,640],[350,545],[356,625],[363,285],[369,285],[372,730],[379,567],[386,836],[390,560],[395,457],[401,832],
    [407,548],[413,883],[418,424],[424,600],[429,62],[436,600],[440,858],[449,555],[455,850],[460,690],[464,860],
    [472,480],[480,192],[488,630],[494,450],[503,690],[509,200],[515,742],[522,408],[526,730],[531,425],[535,728],[538,455],
    [542,700],[547,910],[553,507],[560,850],[563,457],[568,640],[573,345],[580,810],[587,570],[593,770],[598,437],
    [604,742],[608,372],[613,620],[618,508],[625,790],[630,450],[634,700],[638,450],[640,712],[645,562],[651,690],[656,462],[662,700],
    [669,600],[676,510],[682,665],[690,640],[697,487],[702,620],[710,700],[716,825],[721,685],[727,700],[733,780],
    [742,537],[748,720],[755,660],[762,557],[768,773],[774,628],[780,735],[785,557],[792,700],[797,662],[804,850],
    [812,690],[818,765],[822,632],[829,765],[837,602],[845,955],[853,430],[858,700],[862,530],[869,1062],[875,452],
    [880,900],[883,600],[887,1230],[892,710],[897,1000],[899,710],[902,1035],[906,505],[911,930],[916,227],[923,840],[927,232],
    [932,-413],[939,200],[943,900],[948,1355],[955,800],[963,1350],[967,790],[972,192],[979,650],[983,427],[988,795],
    [995,408],[1002,790],[1008,1052],[1015,580],[1020,1142],[1024,445],[1030,790],[1033,380],[1039,287],[1044,820],
    [1051,1170],[1058,585],[1064,860],[1071,622],[1079,915],[1084,396],[1090,720],[1095,500],[1100,930],[1105,1355],
    [1109,940],[1114,1230],[1117,705],[1123,830],[1128,243],[1133,960],[1141,645],[1147,900],[1153,1148],[1157,720],
    [1162,1045],[1165,672],[1172,820],[1178,485],[1184,820],[1190,665],[1194,890],[1199,1005],[1203,850],[1208,1120],
    [1213,690],[1218,985],[1225,690],[1232,882],[1236,690],[1240,810],[1247,557],[1252,700],[1260,848],[1268,790],[1276,597],
    [1283,700],[1289,548],[1294,775],[1300,840],[1306,700],[1311,940],[1318,865],[1328,622],[1339,592],[1345,840],
    [1350,740],[1353,843],[1358,768],[1366,903],[1374,780],[1382,645],[1392,680],[1400,740],[1405,820],[1408,738],
    [1418,843],[1424,740],[1431,638],[1439,705],[1448,642],[1456,740],[1466,765],[1475,690],[1485,607],[1496,655],
    [1502,568],[1510,670],[1519,601],[1525,637],[1531,575],[1538,616],[1542,575],[1548,635],[1557,556],[1566,645],
    [1579,515],[1587,605],[1603,522],[1615,592],[1621,549],[1628,588],[1638,519],[1648,547],[1658,494],[1667,544],
    [1676,588],[1684,528],[1693,559],[1701,498],[1705,556],[1718,501],[1723,543],[1729,512],[1734,556],[1746,547],
    [1757,486],[1773,483],[1782,528],[1789,550],[1794,504],[1804,533],[1809,543],[1819,476],[1828,515],[1840,507],
    [1851,478],[1861,507],[1870,530],[1879,498],[1888,509],[1898,447],[1914,525],[1928,486],[1940,510],[1950,488],
    [1961,496],[1974,505]
];

let seed = 7;
function rand() {
    seed = (seed * 16807) % 2147483647;
    return seed / 2147483647 * 2 - 1;
}
// quiet stretches before and after the impact
const lead = [], tail = [];
for (let n = -832; n < 165; n += 4) lead.push([n, 478 + 10 * rand() + 9 * rand() ** 3]);
for (let n = 1980; n <= 2762; n += 4) tail.push([n, 477 + 13 * rand() + 26 * rand() ** 3]);

const points = lead.concat(burst, tail)
    .map(([n, c]) => px(T0 + n * DT).toFixed(1) + ',' + py(OFFSET - GAIN * c).toFixed(1));
line('zero', area.left, py(0), right, py(0));
line('series', area.left, py(7), right, py(7));
add('polyline', { class: 'series', points: points.join(' ') });

add('circle', { class: 'marker', cx: px(0.0982), cy: py(1074.6), r: 9 });
add('circle', { class: 'marker', cx: px(0.099), cy: py(-1059.7), r: 9 });
add('text', { class: 'marker-label', x: 852, y: 82 }, '1074.61');
add('text', { class: 'marker-label', x: 851, y: 729 }, '-1059.7262');
```
